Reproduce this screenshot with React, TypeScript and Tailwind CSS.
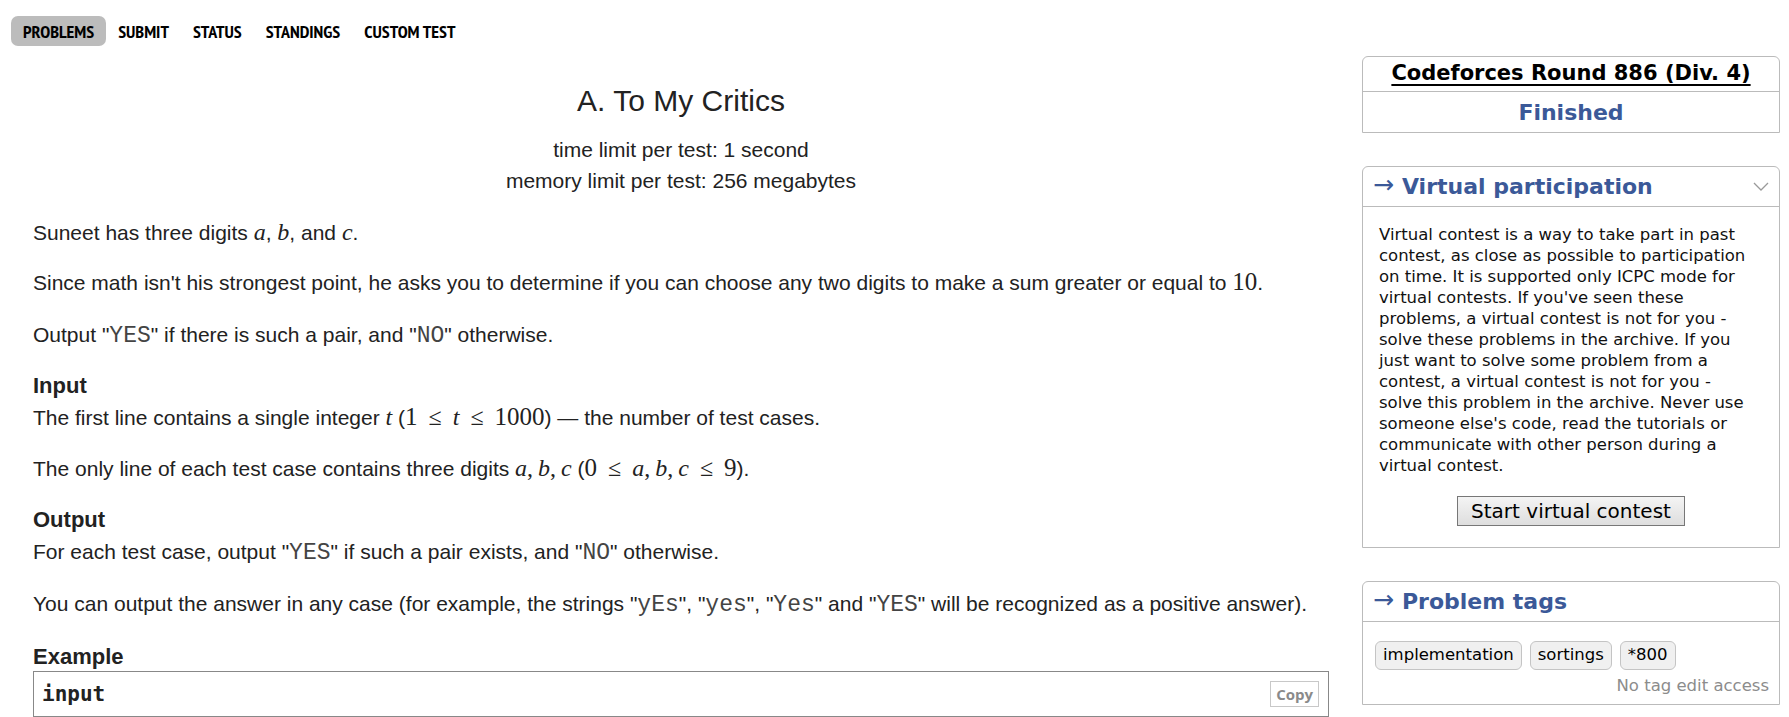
import React from 'react';

const tabs = ['PROBLEMS', 'SUBMIT', 'STATUS', 'STANDINGS', 'CUSTOM TEST'];

const V = ({ children }: { children: React.ReactNode }) => (
  <span className="font-['Liberation_Serif',serif] italic text-[24px] leading-none">{children}</span>
);
const N = ({ children }: { children: React.ReactNode }) => (
  <span className="font-['Liberation_Serif',serif] text-[25px] leading-none">{children}</span>
);
const Le = () => <span className="font-['Liberation_Serif',serif] text-[24px] leading-none mx-[11px]">≤</span>;
const C = () => <span className="font-['Liberation_Serif',serif] text-[24px] leading-none mr-[5px]">,</span>;
const TT = ({ children }: { children: React.ReactNode }) => (
  <span className="font-['Liberation_Mono',monospace] text-[23px] leading-none text-[#444]">{children}</span>
);

function Arrow() {
  return <span className="font-['DejaVu_Sans',sans-serif] font-normal text-[25px] mr-[8px] relative top-[-2px]">→</span>;
}

export default function App() {
  return (
    <div className="bg-white w-[1789px] h-[717px] overflow-hidden text-[#222] font-['Liberation_Sans',Arial,sans-serif]">
      {/* tabs */}
      <div className="flex pt-[16px] pl-[11px]">
        {tabs.map((t, i) => (
          <div
            key={t}
            className={`h-[30px] px-[12px] flex items-center rounded-[7px] font-['Liberation_Sans_Narrow','PT_Sans_Narrow',Roboto,sans-serif] font-bold text-[18px] text-black ${
              i === 0 ? 'bg-[#bcbcbc]' : ''
            }`}
          >
            {t}
          </div>
        ))}
      </div>

      <div className="flex">
        {/* problem statement */}
        <div className="w-[1296px] ml-[33px] text-[21px] leading-[31px]">
          <div className="text-center mt-[37px] text-[30px] leading-[36px]">A. To My Critics</div>
          <div className="text-center mt-[15px]">time limit per test: 1 second</div>
          <div className="text-center">memory limit per test: 256 megabytes</div>

          <p className="mt-[21px] mb-[19px]">
            Suneet has three digits <V>a</V>, <V>b</V>, and <V>c</V>.
          </p>
          <p className="mb-[21px]">
            Since math isn't his strongest point, he asks you to determine if you can choose any two digits to make a sum greater or equal to <N>10</N>.
          </p>
          <p className="mb-[22px]">
            Output "<TT>YES</TT>" if there is such a pair, and "<TT>NO</TT>" otherwise.
          </p>

          <div className="font-bold text-[22px] leading-[28px] mb-[2px]">Input</div>
          <p className="mb-[20px]">
            The first line contains a single integer <V>t</V> (<N>1</N>
            <Le />
            <V>t</V>
            <Le />
            <N>1000</N>) — the number of test cases.
          </p>
          <p className="mb-[22px]">
            The only line of each test case contains three digits <V>a</V>
            <C />
            <V>b</V>
            <C />
            <V>c</V> (<N>0</N>
            <Le />
            <V>a</V>
            <C />
            <V>b</V>
            <C />
            <V>c</V>
            <Le />
            <N>9</N>).
          </p>

          <div className="font-bold text-[22px] leading-[28px] mb-[2px]">Output</div>
          <p className="mb-[21px]">
            For each test case, output "<TT>YES</TT>" if such a pair exists, and "<TT>NO</TT>" otherwise.
          </p>
          <p className="mb-[24px]">
            You can output the answer in any case (for example, the strings "<TT>yEs</TT>", "<TT>yes</TT>", "<TT>Yes</TT>" and "<TT>YES</TT>" will be recognized as a positive answer).
          </p>

          <div className="font-bold text-[22px] leading-[28px]">Example</div>
          <div className="border border-[#888] h-[46px] flex items-center justify-between pl-[8px] pr-[9px]">
            <span className="font-['DejaVu_Sans_Mono',monospace] font-bold text-[21px]">input</span>
            <span className="border border-[#c8c8c8] px-[5px] h-[26px] flex items-center font-['Open_Sans',sans-serif] font-bold text-[15px] text-[#8a8a8a]">
              Copy
            </span>
          </div>
        </div>

        {/* sidebar */}
        <div className="w-[418px] ml-[33px] mt-[10px] font-['DejaVu_Sans',Verdana,sans-serif]">
          <div className="border border-[#bbb] rounded-t-[6px]">
            <div className="h-[35px] flex items-center justify-center border-b border-[#bbb] font-bold text-[21px] text-black underline underline-offset-[4px]">
              Codeforces Round 886 (Div. 4)
            </div>
            <div className="h-[40px] flex items-center justify-center font-bold text-[22px] text-[#3b5998]">Finished</div>
          </div>

          <div className="border border-[#bbb] rounded-t-[6px] mt-[33px]">
            <div className="h-[40px] flex items-center justify-between border-b border-[#bbb] pl-[10px] pr-[10px] text-[#3b5998]">
              <div className="flex items-center font-bold text-[22px]">
                <Arrow />
                Virtual participation
              </div>
              <svg width="16" height="10" viewBox="0 0 16 10" fill="none" stroke="#9a9a9a" strokeWidth="1.3">
                <path d="M1 1l7 7 7-7" />
              </svg>
            </div>
            <div className="pt-[17px] pb-[21px] px-[16px] text-[16.5px] leading-[21px] text-[#111] whitespace-nowrap">
              Virtual contest is a way to take part in past
              <br />
              contest, as close as possible to participation
              <br />
              on time. It is supported only ICPC mode for
              <br />
              virtual contests. If you've seen these
              <br />
              problems, a virtual contest is not for you -
              <br />
              solve these problems in the archive. If you
              <br />
              just want to solve some problem from a
              <br />
              contest, a virtual contest is not for you -
              <br />
              solve this problem in the archive. Never use
              <br />
              someone else's code, read the tutorials or
              <br />
              communicate with other person during a
              <br />
              virtual contest.
              <div className="flex justify-center mt-[20px]">
                <button className="h-[30px] px-[13px] border border-[#777] bg-gradient-to-b from-[#f4f4f4] to-[#dedede] text-[20px] text-black">
                  Start virtual contest
                </button>
              </div>
            </div>
          </div>

          <div className="border border-[#bbb] rounded-t-[6px] mt-[33px]">
            <div className="h-[40px] flex items-center border-b border-[#bbb] pl-[10px] text-[#3b5998]">
              <div className="flex items-center font-bold text-[22px]">
                <Arrow />
                Problem tags
              </div>
            </div>
            <div className="pt-[19px] pb-[8px] pl-[12px] pr-[10px] text-[16.5px]">
              <div className="flex gap-[8px]">
                {['implementation', 'sortings', '*800'].map((t) => (
                  <span
                    key={t}
                    className="h-[29px] px-[7px] flex items-center border border-[#c4c4c4] rounded-[6px] bg-[#f0f0f0] text-black"
                  >
                    {t}
                  </span>
                ))}
              </div>
              <div className="text-right text-[#8c8c8c] leading-[20px] mt-[6px]">No tag edit access</div>
            </div>
          </div>
        </div>
      </div>
    </div>
  );
}
